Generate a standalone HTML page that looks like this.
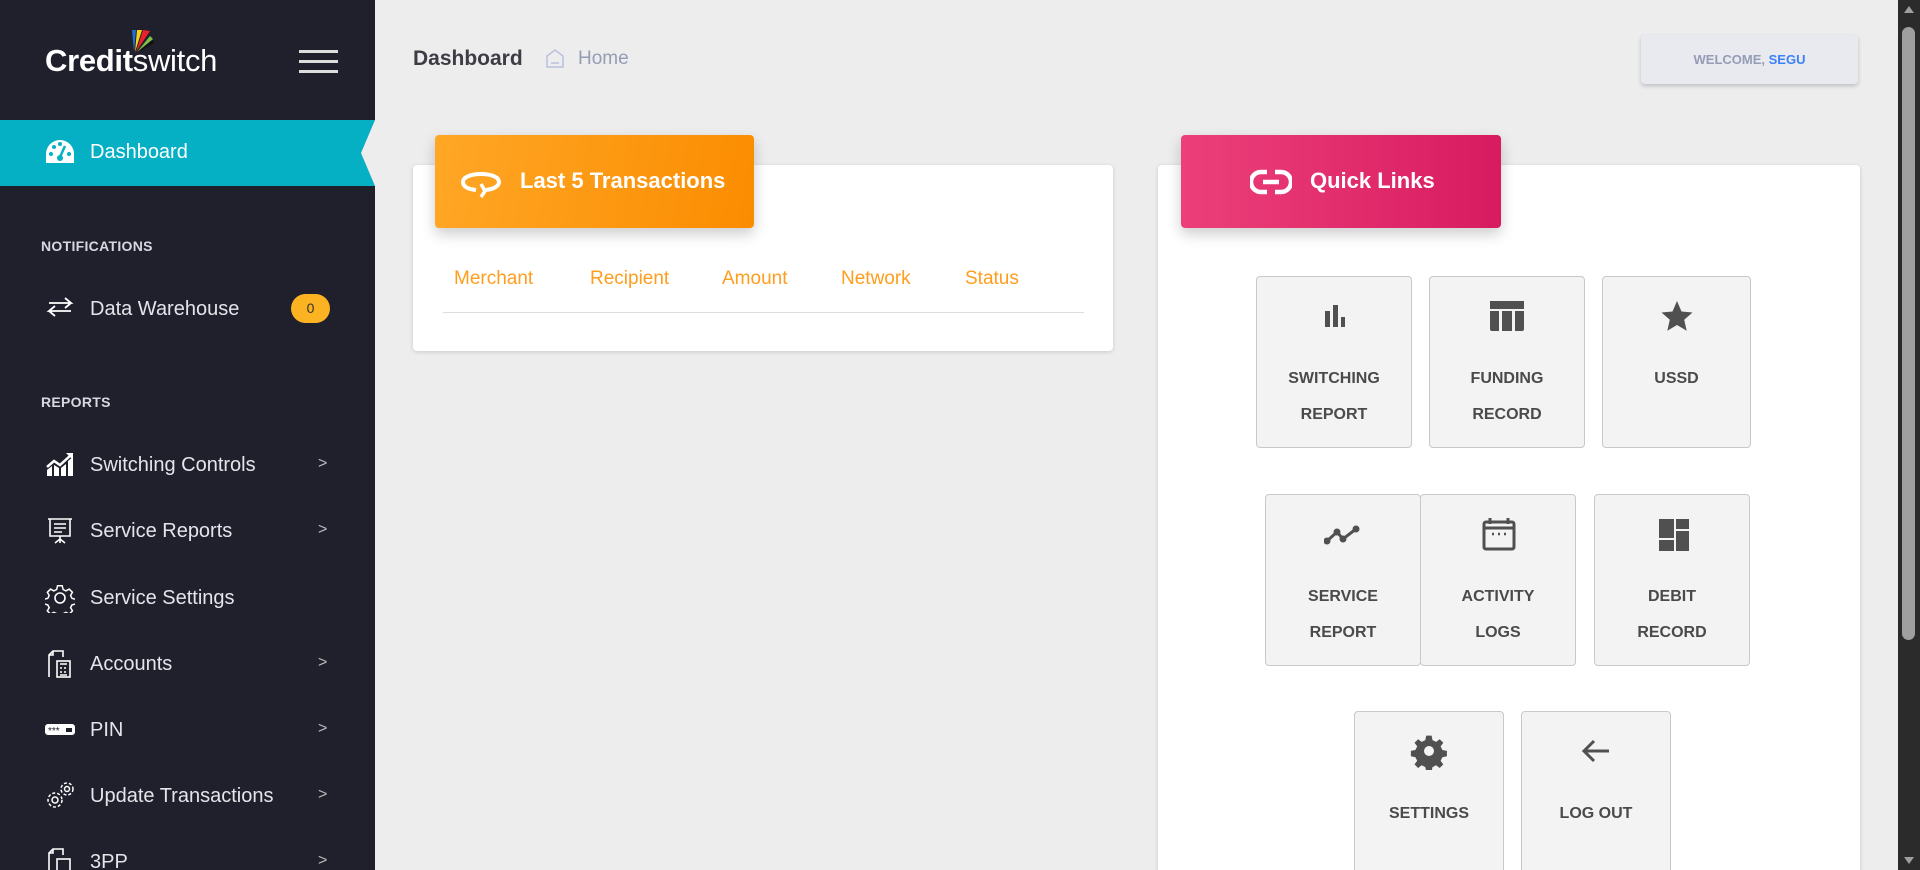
<!DOCTYPE html>
<html style="overflow:hidden;height:870px"><head><meta charset="utf-8"><style>
*{box-sizing:border-box;margin:0;padding:0}
html,body{width:1920px;height:870px;overflow:hidden}
body{background:#ededed;font-family:"Liberation Sans",sans-serif}
#wrap{position:relative;width:1920px;height:870px;overflow:hidden}
.a{position:absolute}
#side{left:0;top:0;width:375px;height:870px;background:#20202d}
.sec{color:#d8d8e0;font-size:14px;font-weight:bold;letter-spacing:.3px;left:41px}
.it{left:90px;color:#e4e4ea;font-size:20px}
.ic{left:45px;width:30px;height:30px}
.chev{left:318px;color:#bbb;font-size:16px}
.tile{position:absolute;background:#f3f3f3;border:1px solid #c9c9c9;border-radius:4px;text-align:center;color:#4a4a4a;font-size:16px;font-weight:bold}
.tile svg{position:absolute;left:50%;top:20px;margin-left:-19px}
.tile .l{position:absolute;left:0;right:0;top:84px;line-height:36px}
.col{color:#ff9d1c;font-size:19px;top:268px}
</style></head><body><div id="wrap">
<div id="side" class="a">
 <div class="a" style="left:45px;top:43px;color:#fff;font-size:31px;letter-spacing:-.3px"><b>Credit</b>switch</div>
 <svg class="a" style="left:128px;top:28px" width="34" height="28" viewBox="0 0 34 28"><path d="M4 2l4 0-2 22z" fill="#1e6fd0"/><path d="M9 2l5 0-7 22z" fill="#f2d21b"/><path d="M15 2l7 1-14 21z" fill="#e8222a"/><path d="M22 8l3 3-16 13z" fill="#7dc242"/><path d="M25 12l1 3-17 10z" fill="#111"/></svg>
 <div class="a" style="left:299px;top:50px;width:39px;height:3px;background:#ddd"></div>
 <div class="a" style="left:299px;top:60px;width:39px;height:3px;background:#ddd"></div>
 <div class="a" style="left:299px;top:70px;width:39px;height:3px;background:#ddd"></div>
 <div class="a" style="left:0;top:120px;width:375px;height:66px;background:#05b0c5"></div>
 <div class="a" style="left:361px;top:120px;width:0;height:0;border-top:33px solid transparent;border-bottom:33px solid transparent;border-right:14px solid #ededed"></div>
 <svg class="a" style="left:45px;top:139px" width="30" height="26" viewBox="0 0 30 26"><path d="M15 1A14 14 0 0 0 1 15v9h28v-9A14 14 0 0 0 15 1z" fill="#fff"/><circle cx="6" cy="15" r="2" fill="#05b0c5"/><circle cx="9" cy="8" r="2" fill="#05b0c5"/><circle cx="15" cy="5" r="2" fill="#05b0c5"/><circle cx="24" cy="15" r="2" fill="#05b0c5"/><path d="M20 7l-5 11" stroke="#05b0c5" stroke-width="2.5"/><circle cx="15" cy="19" r="3" fill="#05b0c5"/></svg>
 <div class="a it" style="top:141px;color:#fff">Dashboard</div>
 <div class="a sec" style="top:238px">NOTIFICATIONS</div>
 <svg class="a" style="left:45px;top:295px" width="30" height="24" viewBox="0 0 30 24" fill="none" stroke="#fff" stroke-width="1.8"><path d="M4 8h22l-6-5M26 8l-6 5M26 16H4l6-5M4 16l6 5"/></svg>
 <div class="a it" style="top:298px">Data Warehouse</div>
 <div class="a" style="left:291px;top:294px;width:39px;height:29px;border-radius:15px;background:#fbb321;color:#333;font-size:14px;text-align:center;line-height:29px">0</div>
 <div class="a sec" style="top:394px">REPORTS</div>
 <svg class="a ic" style="top:450px" viewBox="0 0 30 30" fill="#fff"><path d="M2 26l0-6 5-4 0 10zM9 26V15l5 3v8zM16 26v-8l5-4v12zM23 26V11l5-4v19z"/><path d="M2 17l7-6 6 4 11-10" stroke="#fff" stroke-width="2.5" fill="none"/><path d="M21 3h7v7z"/></svg>
 <div class="a it" style="top:454px">Switching Controls</div><div class="a chev" style="top:455px">&gt;</div>
 <svg class="a ic" style="top:516px" viewBox="0 0 30 30" fill="none" stroke="#fff" stroke-width="1.6"><path d="M3 3h24M5 3v17h20V3M9 8h12M9 12h12M9 16h8M15 20v7M10 27l5-4 5 4"/></svg>
 <div class="a it" style="top:520px">Service Reports</div><div class="a chev" style="top:521px">&gt;</div>
 <svg class="a ic" style="top:583px" viewBox="0 0 30 30" fill="none" stroke="#fff" stroke-width="1.6"><path d="M12.5 2h5l1 4 3 1.5 3.5-2 3.5 3.5-2 3.5 1.5 3 4 1v5l-4 1-1.5 3 2 3.5-3.5 3.5-3.5-2-3 1.5-1 4h-5l-1-4-3-1.5-3.5 2-3.5-3.5 2-3.5-1.5-3-4-1v-5l4-1 1.5-3-2-3.5 3.5-3.5 3.5 2 3-1.5z" transform="scale(.93) translate(1 1)"/><circle cx="15" cy="15" r="5"/></svg>
 <div class="a it" style="top:587px">Service Settings</div>
 <svg class="a ic" style="top:649px" viewBox="0 0 30 30" fill="none" stroke="#fff" stroke-width="1.6"><path d="M4 28V6l4-4h10v6M8 2v4H4"/><rect x="12" y="12" width="13" height="16"/><path d="M15 15h7M15 19h2M19 19h2M15 23h2M19 23h2M15 26h7" stroke-width="1.4"/></svg>
 <div class="a it" style="top:653px">Accounts</div><div class="a chev" style="top:654px">&gt;</div>
 <svg class="a ic" style="top:715px" viewBox="0 0 30 30"><rect x="0" y="9" width="30" height="11" rx="3" fill="#fff"/><text x="3" y="19" font-size="10" fill="#20202d" font-family="Liberation Sans">***</text><rect x="21" y="13" width="6" height="4" fill="#20202d"/></svg>
 <div class="a it" style="top:719px">PIN</div><div class="a chev" style="top:720px">&gt;</div>
 <svg class="a ic" style="top:780px" viewBox="0 0 30 30" fill="none" stroke="#fff" stroke-width="1.5"><circle cx="10" cy="20" r="7" stroke-dasharray="3 2"/><circle cx="10" cy="20" r="3"/><circle cx="22" cy="9" r="6" stroke-dasharray="3 2"/><circle cx="22" cy="9" r="2.5"/></svg>
 <div class="a it" style="top:785px">Update Transactions</div><div class="a chev" style="top:786px">&gt;</div>
 <svg class="a ic" style="top:847px" viewBox="0 0 30 30" fill="none" stroke="#fff" stroke-width="1.6"><path d="M4 28V6l4-4h10v6M8 2v4H4"/><rect x="12" y="12" width="13" height="16"/></svg>
 <div class="a it" style="top:851px">3PP</div><div class="a chev" style="top:852px">&gt;</div>
</div>

<div class="a" style="left:413px;top:47px;font-size:21px;font-weight:bold;color:#3d3d45">Dashboard</div>
<svg class="a" style="left:545px;top:48px" width="20" height="20" viewBox="0 0 20 20" fill="none" stroke="#b8c0dc" stroke-width="1.5"><path d="M2 19V8l8-6 8 6v11z"/><path d="M6 15h8"/></svg>
<div class="a" style="left:578px;top:48px;font-size:19px;color:#959cb6">Home</div>
<div class="a" style="left:1641px;top:35px;width:217px;height:49px;background:#e9eaf0;border-radius:4px;box-shadow:0 2px 4px rgba(0,0,0,.2);text-align:center;line-height:49px;font-size:13px;font-weight:bold;color:#959cb6">WELCOME, <span style="color:#3b82f6">SEGU</span></div>

<div class="a" style="left:413px;top:165px;width:700px;height:186px;background:#fff;border-radius:4px;box-shadow:0 1px 4px rgba(0,0,0,.15)"></div>
<div class="a" style="left:435px;top:135px;width:319px;height:93px;border-radius:4px;background:linear-gradient(100deg,#ffa726,#fb8c00);box-shadow:0 6px 14px rgba(0,0,0,.2)"></div>
<svg class="a" style="left:460px;top:168px" width="42" height="30" viewBox="0 0 42 30" fill="none" stroke="#fff" stroke-width="4"><path d="M16 22C7 21 3 18 3 14c0-5 8-8 18-8s18 3 18 8c0 4-5 7-13 8"/><path d="M21 16l4 7-4 6" stroke-width="3.5"/></svg>
<div class="a" style="left:520px;top:168px;font-size:22px;font-weight:bold;color:#fff">Last 5 Transactions</div>
<div class="a col" style="left:454px">Merchant</div>
<div class="a col" style="left:590px">Recipient</div>
<div class="a col" style="left:722px">Amount</div>
<div class="a col" style="left:841px">Network</div>
<div class="a col" style="left:965px">Status</div>
<div class="a" style="left:443px;top:312px;width:641px;height:1px;background:#ddd"></div>

<div class="a" style="left:1158px;top:165px;width:702px;height:720px;background:#fff;border-radius:4px;box-shadow:0 1px 4px rgba(0,0,0,.15)"></div>
<div class="a" style="left:1181px;top:135px;width:320px;height:93px;border-radius:4px;background:linear-gradient(90deg,#ec407a,#d81b60);box-shadow:0 6px 14px rgba(0,0,0,.2)"></div>
<svg class="a" style="left:1250px;top:169px" width="42" height="26" viewBox="0 0 42 26" fill="none" stroke="#fff" stroke-width="4.5"><path d="M17 3H11a10 10 0 0 0 0 20h6M25 3h6a10 10 0 0 1 0 20h-6M13 13h16"/></svg>
<div class="a" style="left:1310px;top:168px;font-size:22px;font-weight:bold;color:#fff">Quick Links</div>

<div class="tile" style="left:1256px;top:276px;width:156px;height:172px"><svg width="38" height="38" viewBox="0 0 38 38" fill="#505050"><rect x="10" y="14" width="5" height="16"/><rect x="18" y="8" width="5" height="22"/><rect x="26" y="20" width="4" height="10"/></svg><div class="l">SWITCHING<br>REPORT</div></div>
<div class="tile" style="left:1429px;top:276px;width:156px;height:172px"><svg width="38" height="38" viewBox="0 0 38 38" fill="#505050"><path d="M2 4h34v8H2zM2 14h9v20H4a2 2 0 0 1-2-2zM14 14h10v20H14zM27 14h9v18a2 2 0 0 1-2 2h-7z"/></svg><div class="l">FUNDING<br>RECORD</div></div>
<div class="tile" style="left:1602px;top:276px;width:149px;height:172px"><svg width="38" height="38" viewBox="0 0 38 38" fill="#505050"><path d="M19 4l4.5 10.5 11 1-8.3 7.3 2.5 11L19 28l-9.7 5.8 2.5-11L3.5 15.5l11-1z"/></svg><div class="l">USSD</div></div>

<div class="tile" style="left:1265px;top:494px;width:156px;height:172px"><svg width="38" height="38" viewBox="0 0 38 38" fill="none" stroke="#505050" stroke-width="3"><path d="M3 26l10-9 6 7 13-10" /><circle cx="3" cy="26" r="2" fill="#505050"/><circle cx="13" cy="17" r="2" fill="#505050"/><circle cx="19" cy="24" r="2" fill="#505050"/><circle cx="32" cy="14" r="2" fill="#505050"/></svg><div class="l">SERVICE<br>REPORT</div></div>
<div class="tile" style="left:1420px;top:494px;width:156px;height:172px"><svg width="38" height="38" viewBox="0 0 38 38" fill="none" stroke="#505050" stroke-width="3"><rect x="5" y="7" width="30" height="27" rx="2"/><path d="M5 13h30M11 3v6M29 3v6" /><path d="M13 19h2M19 19h2M25 19h2" stroke-width="2.5"/></svg><div class="l">ACTIVITY<br>LOGS</div></div>
<div class="tile" style="left:1594px;top:494px;width:156px;height:172px"><svg width="38" height="38" viewBox="0 0 38 38" fill="#505050"><path d="M6 4h15v19H6zM23 4h13v10H23zM6 25h15v11H6zM23 16h13v20H23z"/></svg><div class="l">DEBIT<br>RECORD</div></div>

<div class="tile" style="left:1354px;top:711px;width:150px;height:180px"><svg width="38" height="38" viewBox="0 0 38 38"><path fill="#505050" d="M16 2h6l1 5 4 2 4-3 4 4-3 4 2 4 5 1v6l-5 1-2 4 3 4-4 4-4-3-4 2-1 5h-6l-1-5-4-2-4 3-4-4 3-4-2-4-5-1v-6l5-1 2-4-3-4 4-4 4 3 4-2z" transform="scale(.9) translate(2 2)"/><circle cx="19" cy="19" r="5" fill="#f3f3f3"/></svg><div class="l">SETTINGS</div></div>
<div class="tile" style="left:1521px;top:711px;width:150px;height:180px"><svg width="38" height="38" viewBox="0 0 38 38" fill="none" stroke="#505050" stroke-width="3"><path d="M32 19H7M17 9L7 19l10 10"/></svg><div class="l">LOG OUT</div></div>

<div class="a" style="left:1898px;top:0;width:22px;height:870px;background:#2b2b2b"></div>
<div class="a" style="left:1902px;top:27px;width:13px;height:613px;border-radius:7px;background:#9f9f9f"></div>
<div class="a" style="left:1904px;top:6px;width:0;height:0;border-left:5px solid transparent;border-right:5px solid transparent;border-bottom:7px solid #9f9f9f"></div>
<div class="a" style="left:1904px;top:857px;width:0;height:0;border-left:5px solid transparent;border-right:5px solid transparent;border-top:7px solid #9f9f9f"></div>
</div></body></html>
